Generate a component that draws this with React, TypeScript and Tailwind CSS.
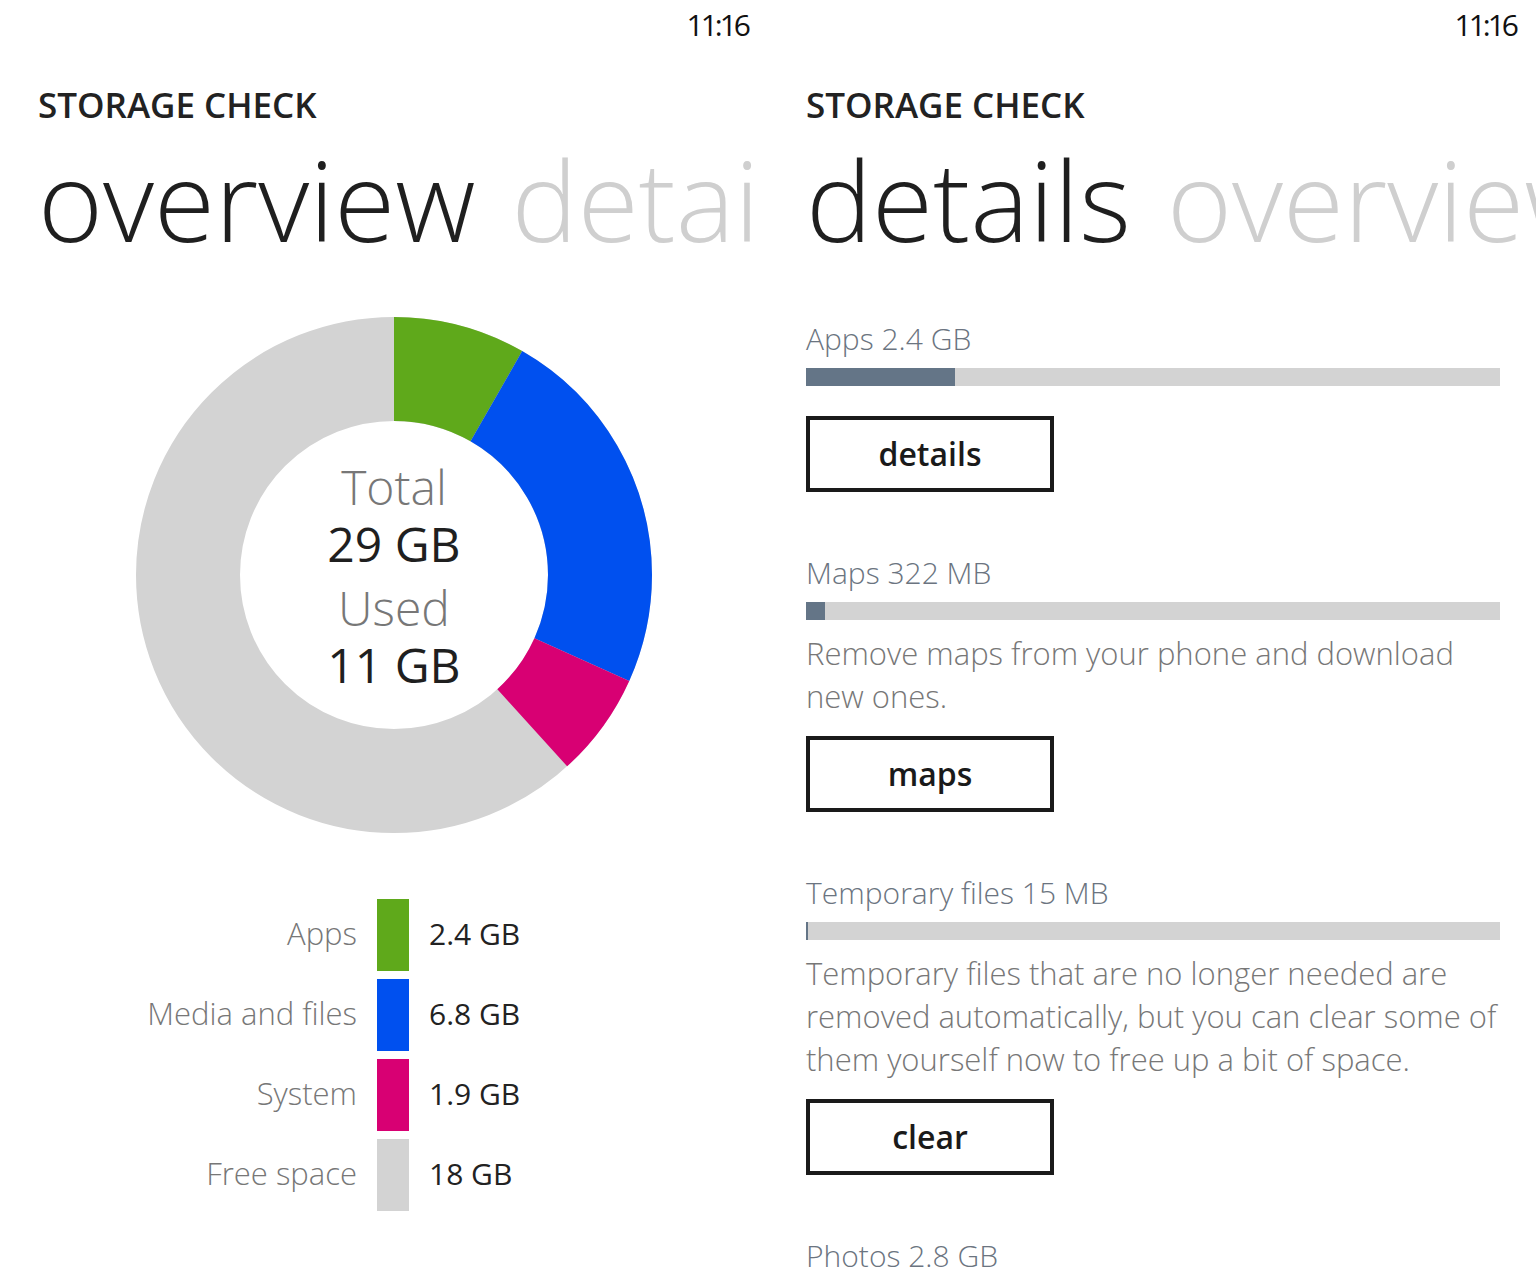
import React from 'react';

const DONUT = [
  { label: 'Apps', value: '2.4 GB', gb: 2.4, color: '#5fa91b', swatch: 'bg-[#5fa91b]' },
  { label: 'Media and files', value: '6.8 GB', gb: 6.8, color: '#0050ef', swatch: 'bg-[#0050ef]' },
  { label: 'System', value: '1.9 GB', gb: 1.9, color: '#d80073', swatch: 'bg-[#d80073]' },
  { label: 'Free space', value: '18 GB', gb: 17.9, color: '#d3d3d3', swatch: 'bg-[#d3d3d3]' },
];

function StatusBar() {
  return (
    <div className="h-[50px] flex justify-end pr-[20px] text-[30px] leading-[50px] tracking-[-3px] text-[#111]">
      11:16
    </div>
  );
}

function PivotHeader({ active, next }: { active: string; next: string }) {
  return (
    <div className="pl-[38px]">
      <p className="mt-[37px] text-[35px] leading-[35px] font-semibold text-[#222]">STORAGE CHECK</p>
      <div className="mt-[22px] flex gap-[36px] whitespace-nowrap text-[111px] leading-[111px] font-light">
        <span className="text-[#1f1f1f]">{active}</span>
        <span className="text-[#cfcfcf]">{next}</span>
      </div>
    </div>
  );
}

function Donut() {
  const r = 206;
  const c = 2 * Math.PI * r;
  const total = 29;
  let start = 0;
  const arcs = DONUT.slice(0, 3).map((s) => {
    const len = (s.gb / total) * c;
    const arc = { color: s.color, len, start };
    start += len;
    return arc;
  });

  return (
    <div className="relative w-[516px] h-[516px] ml-[136px] mt-[62px]">
      <svg width="516" height="516" viewBox="0 0 516 516">
        <circle cx="258" cy="258" r={r} fill="none" stroke="#d3d3d3" strokeWidth="104" />
        <g transform="rotate(-90 258 258)">
          {arcs.map((a) => (
            <circle
              key={a.color}
              cx="258"
              cy="258"
              r={r}
              fill="none"
              stroke={a.color}
              strokeWidth="104"
              strokeDasharray={`${a.len} ${c - a.len}`}
              strokeDashoffset={-a.start}
            />
          ))}
        </g>
      </svg>
      <div className="absolute inset-0 pt-[141px] flex flex-col items-center text-[48px] leading-[57px]">
        <span className="text-[#777] font-light">Total</span>
        <span className="text-[#1f1f1f]">29 GB</span>
        <span className="mt-[7px] text-[#777] font-light">Used</span>
        <span className="text-[#1f1f1f]">11 GB</span>
      </div>
    </div>
  );
}

function Legend() {
  return (
    <div className="mt-[66px] flex flex-col gap-[8px]">
      {DONUT.map((s) => (
        <div key={s.label} className="flex items-center h-[72px] pb-[3px]">
          <span className="w-[357px] text-right text-[31px] text-[#777] font-light">{s.label}</span>
          <span className={`ml-[20px] w-[32px] h-[72px] mt-[3px] ${s.swatch}`} />
          <span className="ml-[20px] text-[30px] text-[#222]">{s.value}</span>
        </div>
      ))}
    </div>
  );
}

function Section({
  title,
  fill,
  text,
  action,
  first,
}: {
  title: string;
  fill: number;
  text?: string;
  action?: string;
  first?: boolean;
}) {
  return (
    <div className={first ? 'mt-[64px]' : 'mt-[61px]'}>
      <p className="text-[30px] leading-[40px] font-light text-[#6b7480]">{title}</p>
      <div className="mt-[9px] h-[18px] w-[694px] bg-[#d3d3d3]">
        <div className="h-full bg-[#647587]" style={{ width: `${fill}px` }} />
      </div>
      {text && (
        <p className="mt-[12px] w-[700px] text-[31px] leading-[43px] font-light text-[#777]">{text}</p>
      )}
      {action && (
        <button
          type="button"
          className={`${text ? 'mt-[18px]' : 'mt-[30px]'} w-[248px] h-[76px] border-[4px] border-[#1a1a1a] text-[32px] font-semibold text-[#1a1a1a] flex items-center justify-center`}
        >
          {action}
        </button>
      )}
    </div>
  );
}

export default function App() {
  return (
    <div className="h-[1281px] w-[1536px] overflow-hidden bg-white flex font-['Open_Sans',sans-serif]">
      <div className="w-[768px] shrink-0 overflow-hidden">
        <StatusBar />
        <PivotHeader active="overview" next="details" />
        <Donut />
        <Legend />
      </div>
      <div className="w-[768px] shrink-0 overflow-hidden">
        <StatusBar />
        <PivotHeader active="details" next="overview" />
        <div className="pl-[38px]">
          <Section title="Apps 2.4 GB" fill={149} action="details" first />
          <Section
            title="Maps 322 MB"
            fill={19}
            text="Remove maps from your phone and download new ones."
            action="maps"
          />
          <Section
            title="Temporary files 15 MB"
            fill={2}
            text="Temporary files that are no longer needed are removed automatically, but you can clear some of them yourself now to free up a bit of space."
            action="clear"
          />
          <Section title="Photos 2.8 GB" fill={170} />
        </div>
      </div>
    </div>
  );
}
